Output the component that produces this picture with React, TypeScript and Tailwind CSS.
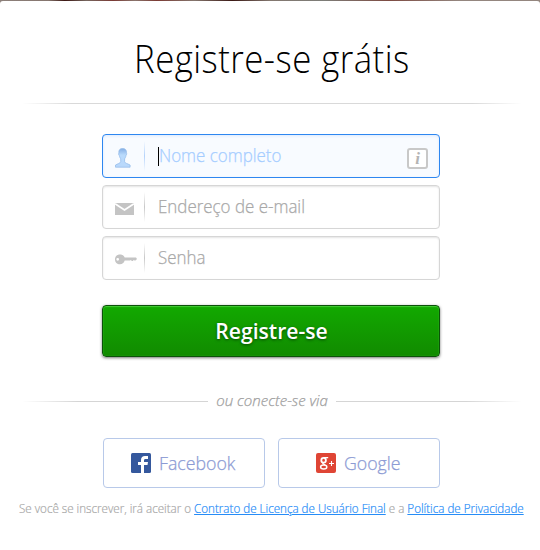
import type { ReactNode } from "react";

const UserIcon = () => (
  <svg width="16" height="20" viewBox="0 0 16 20">
    <defs>
      <linearGradient id="user" x1="0" y1="0" x2="0" y2="1">
        <stop offset="0" stopColor="#85aee4" />
        <stop offset="0.35" stopColor="#b9dafc" />
        <stop offset="1" stopColor="#b9d8fb" />
      </linearGradient>
    </defs>
    <path
      d="M7.600.5c2.800 0 4.200 1.700 3.800 4.500.5.4.3 2-.4 2.500-.3 1.600-.8 2.500-1.400 3.300v3c.6 1.600 3 1.800 5.500 3.200v2.200H.5V17c2.500-1.400 4.600-1.600 5.200-3.200v-3c-.6-.8-1.100-1.700-1.400-3.300-.7-.5-.9-2.100-.4-2.500C3.500 2.200 4.800.5 7.600.5Z"
      fill="url(#user)"
      stroke="#8fb8e8"
      strokeWidth=".7"
    />
  </svg>
);

const MailIcon = () => (
  <svg width="19" height="12" viewBox="0 0 19 12">
    <path d="M0 0h19v12H0z" fill="#c4c4c4" />
    <path d="M0 .8 9.500 7 19 .8" fill="none" stroke="#fff" strokeWidth="1.800" />
  </svg>
);

const KeyIcon = () => (
  <svg width="22" height="11" viewBox="0 0 22 11">
    <path
      fillRule="evenodd"
      d="M5 .5c2.400 0 4 1.200 4.700 3.100H21l1 1.500-1.500 1.500h-1l-.8-.6-.9.9h-1l-.9-.9-.9.6H9.700C8.800 9.200 7.300 10.300 5 10.300c-3 0-5-2-5-4.900s2-4.900 5-4.900ZM2.700 4a1.300 1.300 0 1 0 0 2.700 1.300 1.300 0 0 0 0-2.700Z"
      fill="#c4c4c4"
    />
  </svg>
);

const FacebookIcon = () => (
  <svg width="20" height="20" viewBox="0 0 20 20">
    <rect width="20" height="20" rx="1.500" fill="#35589d" />
    <path
      d="M10 20v-8H7V9h3V7c0-2.900 1.500-4 4-4h3v3h-2c-1.400 0-2 .4-2 1.500V9h4l-.5 3H13v8Z"
      fill="#fff"
    />
  </svg>
);

const GoogleIcon = () => (
  <svg width="20" height="20" viewBox="0 0 20 20">
    <rect width="20" height="20" rx="2" fill="#df4535" />
    <g fill="none" stroke="#fff">
      <ellipse cx="7.600" cy="7.200" rx="2.300" ry="2.400" strokeWidth="1.800" />
      <path d="M8 4.700h4.200M7.500 9.600c-1.800 1 .4 1.600 1.700 2.300" strokeWidth="1.300" />
      <ellipse cx="7.700" cy="13.900" rx="3.100" ry="2" strokeWidth="1.500" />
      <path d="M15.500 8v5M13 10.500h5" strokeWidth="1.100" />
    </g>
  </svg>
);

const Field = ({
  icon,
  label,
  active = false,
}: {
  icon: ReactNode;
  label: string;
  active?: boolean;
}) => (
  <div
    className={`flex h-[44px] items-center rounded border ${
      active
        ? "border-[#2e87f0] bg-[#f8fbff] shadow-[inset_0_1px_3px_#dceaff]"
        : "border-[#d6d6d6] bg-white shadow-[inset_0_1px_2px_#e4e4e4]"
    }`}
  >
    <div className="flex w-[41px] shrink-0 items-center pt-[3px] pl-3">
      {icon}
    </div>
    <div
      className={`h-[30px] w-px bg-linear-to-b from-transparent to-transparent ${
        active ? "via-[#b5d3fb]" : "via-[#c8c8c8]"
      }`}
    />
    <div
      className={`ml-[13px] flex flex-1 items-center text-[18px] leading-[22px] font-light whitespace-nowrap [-webkit-text-stroke:0.25px] ${
        active ? "text-[#a5cdff]" : "text-[#a8a8a8]"
      }`}
    >
      {active && <span className="h-[19px] w-px bg-black" />}
      <span className="-mt-0.5 origin-left scale-x-[0.94]">{label}</span>
    </div>
    {active && (
      <span className="mt-[5px] mr-[11px] flex size-[21px] items-center justify-center rounded-[3px] border-2 border-[#c8c8c8] bg-white font-['Liberation_Serif',serif] text-[17px] leading-none font-bold text-[#b4b4b4] italic">
        i
      </span>
    )}
  </div>
);

const SocialButton = ({ icon, label }: { icon: ReactNode; label: string }) => (
  <button className="flex h-[50px] w-[162px] items-center justify-center gap-2 rounded border border-[#b8c9e9] pr-px text-[18px] font-light text-[#8c9bd4] [-webkit-text-stroke:0.25px]">
    {icon}
    <span className="origin-left scale-x-[0.985]">{label}</span>
  </button>
);

export default function App() {
  return (
    <main className="h-[550px] w-[540px] overflow-hidden bg-[linear-gradient(90deg,#8d817b,#85756e_9%,#3c1713_12%,#76665f_16%,#7a3a34_21%,#8a756d_25%,#7b3b34_29%,#85766e_36%,#3b1915_43%,#83776f_50%,#7d7d78_60%,#7d4b42_72%,#94867f_85%,#94867f)] pt-px font-['Open_Sans',sans-serif]">
      <div className="h-full rounded-t-[3px] bg-white">
        <h1 className="flex h-[102px] scale-x-[0.915] items-center justify-center pt-[12px] pl-1 text-[38px] font-light tracking-[0.5px] whitespace-nowrap text-black">
          Registre-se grátis
        </h1>
        <div className="mr-[18px] ml-[22px] h-px bg-linear-to-r from-transparent from-0% via-[#d9d9d9] via-10% to-[#d9d9d9]">
          <div className="ml-auto h-px w-[50px] bg-linear-to-r from-transparent to-white" />
        </div>

        <form className="mx-auto mt-[30px] flex w-[338px] translate-x-px flex-col gap-[7px]">
          <Field icon={<UserIcon />} label="Nome completo" active />
          <Field icon={<MailIcon />} label="Endereço de e-mail" />
          <Field icon={<KeyIcon />} label="Senha" />
          <button
            type="button"
            className="mt-[18px] h-[52px] rounded border border-[#0c5209] bg-linear-to-b from-[#12a900] to-[#118b00] pb-px pl-0.5 text-[22px] font-semibold text-white shadow-[inset_0_1px_1px_#44ca36,inset_0_0_1px_#44ca36,0_1px_3px_#777] [text-shadow:0_1px_3px_#064900]"
          >
            <span className="inline-block scale-x-[0.96]">Registre-se</span>
          </button>
        </form>

        <div className="mt-[33px] mr-[18px] ml-[22px] flex h-[22px] items-center">
          <div className="h-px w-[186px] bg-linear-to-r from-transparent via-[#d5d5d5] via-30% to-[#d5d5d5]" />
          <span className="-mt-[3px] w-[128px] text-center text-[15px] leading-[20px] font-light whitespace-nowrap text-[#a0a0a0] italic [-webkit-text-stroke:0.25px]">
            ou conecte-se via
          </span>
          <div className="h-px flex-1 bg-linear-to-l from-transparent via-[#d5d5d5] via-30% to-[#d5d5d5]" />
        </div>

        <div className="mt-[26px] ml-[103px] flex gap-[13px]">
          <SocialButton icon={<FacebookIcon />} label="Facebook" />
          <SocialButton icon={<GoogleIcon />} label="Google" />
        </div>

        <p className="mt-[12px] ml-[19px] w-max origin-left scale-x-[0.968] text-[12px] leading-[18px] font-light whitespace-nowrap text-[#a8a8a8] [-webkit-text-stroke:0.2px]">
          Se você se inscrever, irá aceitar o{" "}
          <a className="text-[#268cf7] underline">
            Contrato de Licença de Usuário Final
          </a>{" "}
          e a{" "}
          <a className="text-[#268cf7] underline">Política de Privacidade</a>
        </p>
      </div>
    </main>
  );
}
